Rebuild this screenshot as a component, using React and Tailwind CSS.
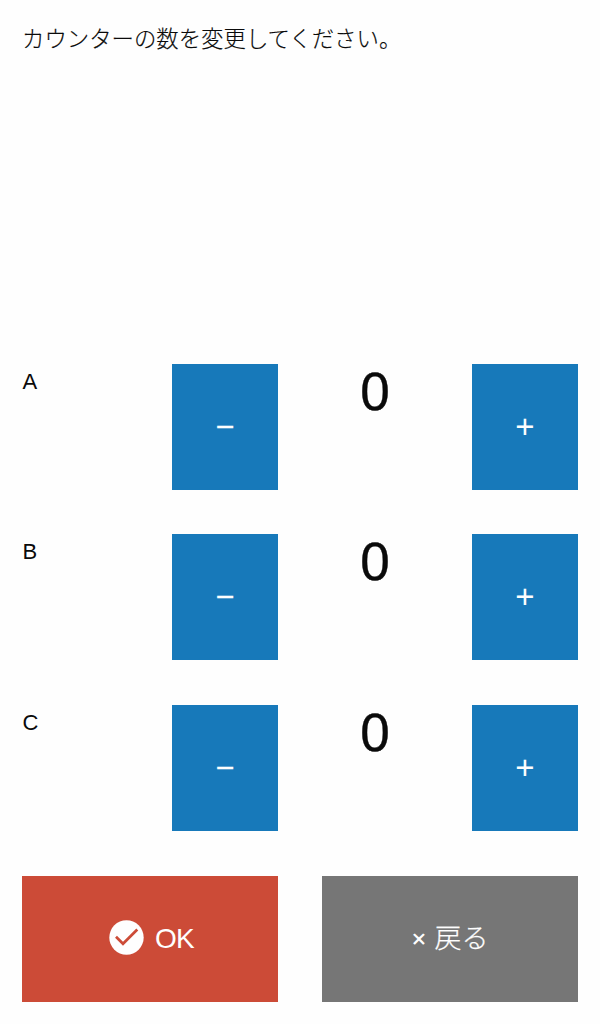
const counters = [
  { label: "A", value: 0 },
  { label: "B", value: 0 },
  { label: "C", value: 0 },
];

function StepButton({ children }) {
  return (
    <button className="flex h-[126px] w-[106px] items-center justify-center bg-[#1779ba] pb-px text-[33px] leading-none text-[#fefefe]">
      {children}
    </button>
  );
}

function CounterRow({ label, value }) {
  return (
    <div className="grid grid-cols-[106px_106px_106px_106px] justify-between">
      <div className="pl-[0.5px] text-[22px] leading-[35px]">{label}</div>
      <StepButton>−</StepButton>
      <div className="w-[106px] text-center text-[53px] leading-[56px] [-webkit-text-stroke:0.4px]">{value}</div>
      <StepButton>+</StepButton>
    </div>
  );
}

function CheckCircle() {
  return (
    <svg viewBox="0 0 35 35" className="mb-[3px] size-[35px]">
      <circle cx="17.5" cy="17.5" r="17.2" fill="currentColor" />
      <path d="M7 16.8l7 7 14.3-14.3" fill="none" stroke="#cc4b37" strokeWidth="2.7" />
    </svg>
  );
}

export default function App() {
  return (
    <main className="flex h-[1024px] w-[600px] flex-col bg-[#fefefe] px-[22px] pt-[21px] font-['Liberation_Sans','Noto_Sans_CJK_JP',sans-serif] text-[#0a0a0a]">
      <p className="h-[343px] pt-px text-[22.4px] leading-[35px] font-light [-webkit-text-stroke:0.15px]">カウンターの数を変更してください。</p>
      <section className="flex flex-col gap-[44.4px]">
        {counters.map((c) => (
          <CounterRow key={c.label} {...c} />
        ))}
      </section>
      <div className="mt-[45.2px] grid grid-cols-2 gap-11 text-[28px] leading-none text-[#fefefe]">
        <button className="flex h-[126px] items-center justify-center gap-[11px] bg-[#cc4b37] pl-[3px]">
          <CheckCircle />
          <span className="-tracking-[0.7px]">OK</span>
        </button>
        <button className="flex h-[126px] items-center justify-center gap-[8px] bg-[#767676]">
          <span className="pb-[2px] font-['Noto_Sans',sans-serif] text-[26px] font-medium">×</span>
          <span className="pt-[2px] text-[27px] font-light [-webkit-text-stroke:0.25px]">戻る</span>
        </button>
      </div>
    </main>
  );
}
